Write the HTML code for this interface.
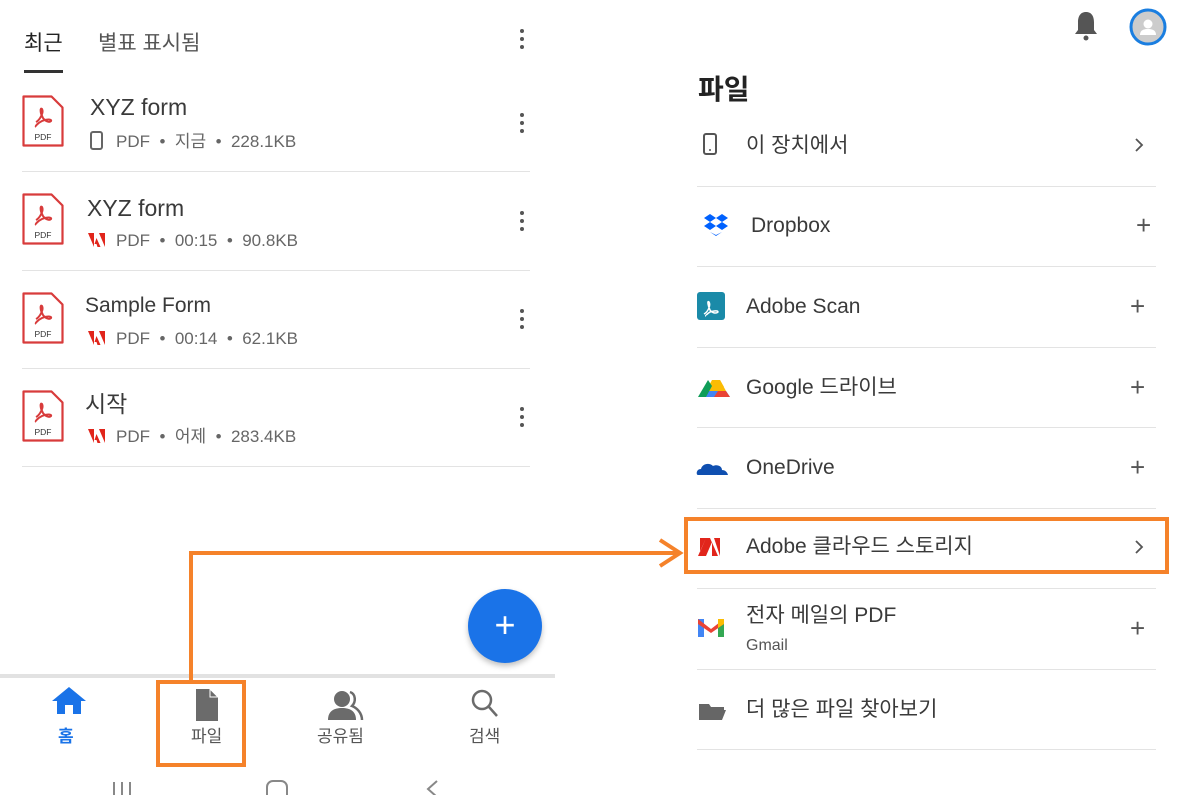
<!DOCTYPE html>
<html><head><meta charset="utf-8"><style>
*{margin:0;padding:0;box-sizing:border-box}
body{width:1200px;height:795px;background:#fff;position:relative;overflow:hidden;font-family:"Liberation Sans","Noto Sans CJK KR",sans-serif;color:#333}
.a{position:absolute;white-space:nowrap}
.hl{position:absolute;height:1px;background:#e3e3e3}
.t{font-size:23px;color:#3a3a3a;line-height:1}
.m{font-size:17px;color:#666;line-height:1}
.r{font-size:21px;color:#3a3a3a;line-height:1}
.k{position:absolute;width:4px}
.k i{display:block;width:4px;height:4px;border-radius:2px;background:#555;margin-bottom:4px}
.plus{position:absolute;font-size:26px;color:#555;line-height:1}
.chev{position:absolute}
</style></head><body>
<!-- left header -->
<div class="a" style="left:24px;top:27px;font-size:21px;color:#222">최근</div>
<div class="a" style="left:24px;top:70px;width:39px;height:3px;background:#333"></div>
<div class="a" style="left:98px;top:27px;font-size:21px;color:#555">별표 표시됨</div>
<div class="k" style="left:520px;top:29px"><i></i><i></i><i></i></div>

<!-- file rows -->
<svg class="a" style="left:0;top:0" width="560" height="470">
 <defs><g id="pdf"><path d="M1.5 1.5h28l11 11v38h-39z" fill="#fff" stroke="#d83b3b" stroke-width="2.2" stroke-linejoin="round"/><path d="M14 27c4-2 8-10 6-13-2-2-2 4 1 9 2 3 6 5 8 3 1-2-5-2-9 0-4 2-7 5-6 6" fill="none" stroke="#d83b3b" stroke-width="2"/><text x="21" y="45" font-size="8.5" text-anchor="middle" fill="#333" font-family="Liberation Sans">PDF</text></g>
 <g id="ad"><path d="M0 0h6v14z M11 0h6v14z M8.5 5l4 9h-3l-1-3h-2z" fill="#e1251b"/></g></defs>
 <use href="#pdf" x="22" y="95"/><use href="#pdf" x="22" y="193"/><use href="#pdf" x="22" y="292"/><use href="#pdf" x="22" y="390"/>
 <rect x="91" y="132" width="11" height="17" rx="2" fill="none" stroke="#666" stroke-width="2"/>
 <use href="#ad" x="88" y="233"/><use href="#ad" x="88" y="331"/><use href="#ad" x="88" y="429"/>
</svg>
<div class="a t" style="left:90px;top:96px">XYZ form</div>
<div class="a m" style="left:116px;top:133px">PDF &nbsp;•&nbsp; 지금 &nbsp;•&nbsp; 228.1KB</div>
<div class="k" style="left:520px;top:113px"><i></i><i></i><i></i></div>
<div class="hl" style="left:22px;top:171px;width:508px"></div>
<div class="a t" style="left:87px;top:197px">XYZ form</div>
<div class="a m" style="left:116px;top:232px">PDF &nbsp;•&nbsp; 00:15 &nbsp;•&nbsp; 90.8KB</div>
<div class="k" style="left:520px;top:211px"><i></i><i></i><i></i></div>
<div class="hl" style="left:22px;top:270px;width:508px"></div>
<div class="a" style="left:85px;top:295px;font-size:21px;color:#3a3a3a;line-height:1">Sample Form</div>
<div class="a m" style="left:116px;top:330px">PDF &nbsp;•&nbsp; 00:14 &nbsp;•&nbsp; 62.1KB</div>
<div class="k" style="left:520px;top:309px"><i></i><i></i><i></i></div>
<div class="hl" style="left:22px;top:368px;width:508px"></div>
<div class="a t" style="left:85px;top:393px">시작</div>
<div class="a m" style="left:116px;top:428px">PDF &nbsp;•&nbsp; 어제 &nbsp;•&nbsp; 283.4KB</div>
<div class="k" style="left:520px;top:407px"><i></i><i></i><i></i></div>
<div class="hl" style="left:22px;top:466px;width:508px"></div>

<!-- FAB -->
<div class="a" style="left:468px;top:589px;width:74px;height:74px;border-radius:50%;background:#1a73e8;box-shadow:0 3px 6px rgba(0,0,0,.25);color:#fff;font-size:36px;text-align:center;line-height:72px">+</div>

<!-- bottom nav -->
<div class="a" style="left:0;top:674px;width:555px;height:4px;background:#e2e2e2"></div>
<svg class="a" style="left:0;top:680px" width="560" height="115">
 <path d="M69 7l-17 14h5v13h8v-9h8v9h8v-13h5z" fill="#1a73e8"/>
 <path d="M196 9h14l8 8v24h-22z" fill="#6b6b6b"/><path d="M210 9l8 8h-8z" fill="#6b6b6b" stroke="#fff" stroke-width="1"/>
 <circle cx="342" cy="19" r="8" fill="#6b6b6b"/><path d="M328 40c0-9 6-12 14-12s14 3 14 12z" fill="#6b6b6b"/><path d="M350 12c6 2 6 10 2 14 5 2 10 7 10 14" fill="none" stroke="#6b6b6b" stroke-width="2.5"/>
 <circle cx="482" cy="20" r="9" fill="none" stroke="#6b6b6b" stroke-width="2.5"/><path d="M489 27l8 9" stroke="#6b6b6b" stroke-width="2.5"/>
 <path d="M114 102v15M122 102v15M130 102v15" stroke="#888" stroke-width="2"/>
 <rect x="267" y="101" width="20" height="22" rx="6" fill="none" stroke="#888" stroke-width="2"/>
 <path d="M437 101l-9 8 9 8" fill="none" stroke="#888" stroke-width="2"/>
</svg>
<div class="a" style="left:58px;top:722px;font-size:17px;color:#1a73e8;font-weight:bold">홈</div>
<div class="a" style="left:191px;top:722px;font-size:17px;color:#555">파일</div>
<div class="a" style="left:317px;top:722px;font-size:17px;color:#555">공유됨</div>
<div class="a" style="left:469px;top:722px;font-size:17px;color:#555">검색</div>

<!-- right header -->
<svg class="a" style="left:1070px;top:8px" width="110" height="40">
 <path d="M16 4c-6 0-8 5-8 10v8l-3 4h22l-3-4v-8c0-5-2-10-8-10z" fill="#555"/><circle cx="16" cy="30" r="2.5" fill="#555"/>
 <circle cx="78" cy="19" r="17" fill="#ccc" stroke="#1a7ee0" stroke-width="3"/><circle cx="78" cy="16" r="4.5" fill="#fff"/><path d="M70 27c0-5 4-6 8-6s8 1 8 6z" fill="#fff"/>
</svg>
<div class="a" style="left:698px;top:68px;font-size:28px;font-weight:bold;color:#222">파일</div>

<svg class="a" style="left:690px;top:120px" width="50" height="620">
 <rect x="14" y="14" width="12" height="20" rx="2" fill="none" stroke="#555" stroke-width="2"/><circle cx="20" cy="30" r="1" fill="#555"/>
 <path d="M14 98l6-4 6 4-6 4zM26 98l6-4 6 4-6 4zM14 106l6-4 6 4-6 4zM26 106l6-4 6 4-6 4zM20 112l6 3 6-3-6 4z" fill="#0061fe"/>
 <rect x="7" y="172" width="28" height="28" rx="3" fill="#1a8aa8"/><path d="M14 194c4-2 7-9 5-12-2-2-1 4 1 8 2 3 6 4 8 2 0-2-5-1-8 0-3 2-5 4-4 4" fill="none" stroke="#fff" stroke-width="1.5"/>
 <g transform="translate(0,16)">
 <path d="M16 255l6-11h8l6 11z" fill="#fbbc04"/><path d="M22 244h8l4 7h-8z" fill="#fbbc04"/><path d="M12 261l4-6h20l4 6z" fill="#4285f4"/><path d="M8 261l10-17 4 6-6 11z" fill="#0f9d58"/><path d="M28 255h8l4 6h-16z" fill="#ea4335"/>
 </g>
 <path d="M8 355c-2 0-2-6 3-6 1-5 8-7 12-3 4-2 9 0 9 4 5 0 6 5 6 5z" fill="#0f4fb0"/>
 <g transform="translate(0,18)">
 <path d="M8 418h8l6-14v14h6l-8-18h-4z M10 400h6l-6 14z M24 400h6v18z" fill="#e1251b"/>
 </g>
 <rect x="8" y="499" width="6" height="18" fill="#4285f4"/><rect x="28" y="499" width="6" height="18" fill="#34a853"/><path d="M8 499l13 10 13-10v5l-13 9-13-9z" fill="#ea4335"/><path d="M28 499h6v5l-6 4z" fill="#fbbc04"/>
 <path d="M9 584h10l2 3h13v3H13l-4 10z M13 590h23l-4 10H9z" fill="#666"/>
</svg>

<svg class="a" style="left:1130px;top:0" width="30" height="795">
 <path d="M6 139l6 6-6 6" fill="none" stroke="#555" stroke-width="1.8"/>
 <path d="M6 541l6 6-6 6" fill="none" stroke="#555" stroke-width="1.8"/>
</svg>

<div class="a r" style="left:746px;top:135px">이 장치에서</div>
<div class="hl" style="left:697px;top:186px;width:459px"></div>
<div class="a r" style="left:751px;top:215px">Dropbox</div><div class="plus" style="left:1136px;top:212px">+</div>
<div class="hl" style="left:697px;top:266px;width:459px"></div>
<div class="a r" style="left:746px;top:296px">Adobe Scan</div><div class="plus" style="left:1130px;top:293px">+</div>
<div class="hl" style="left:697px;top:347px;width:459px"></div>
<div class="a r" style="left:746px;top:377px">Google 드라이브</div><div class="plus" style="left:1130px;top:374px">+</div>
<div class="hl" style="left:697px;top:427px;width:459px"></div>
<div class="a r" style="left:746px;top:457px">OneDrive</div><div class="plus" style="left:1130px;top:454px">+</div>
<div class="hl" style="left:697px;top:508px;width:459px"></div>
<div class="a r" style="left:746px;top:536px">Adobe 클라우드 스토리지</div>
<div class="hl" style="left:697px;top:588px;width:459px"></div>
<div class="a r" style="left:746px;top:605px">전자 메일의 PDF</div>
<div class="a" style="left:746px;top:637px;font-size:16px;color:#555">Gmail</div><div class="plus" style="left:1130px;top:615px">+</div>
<div class="hl" style="left:697px;top:669px;width:459px"></div>
<div class="a r" style="left:746px;top:699px">더 많은 파일 찾아보기</div>
<div class="hl" style="left:697px;top:749px;width:459px"></div>

<!-- orange annotations -->
<div class="a" style="left:156px;top:680px;width:90px;height:87px;border:4px solid #f5822a"></div>
<div class="a" style="left:684px;top:517px;width:485px;height:57px;border:4px solid #f5822a"></div>
<svg class="a" style="left:0;top:0" width="1200" height="795">
 <path d="M191 682V553H680" fill="none" stroke="#f5822a" stroke-width="4"/>
 <path d="M660 540l20 13-20 13" fill="none" stroke="#f5822a" stroke-width="4"/>
</svg>
</body></html>
